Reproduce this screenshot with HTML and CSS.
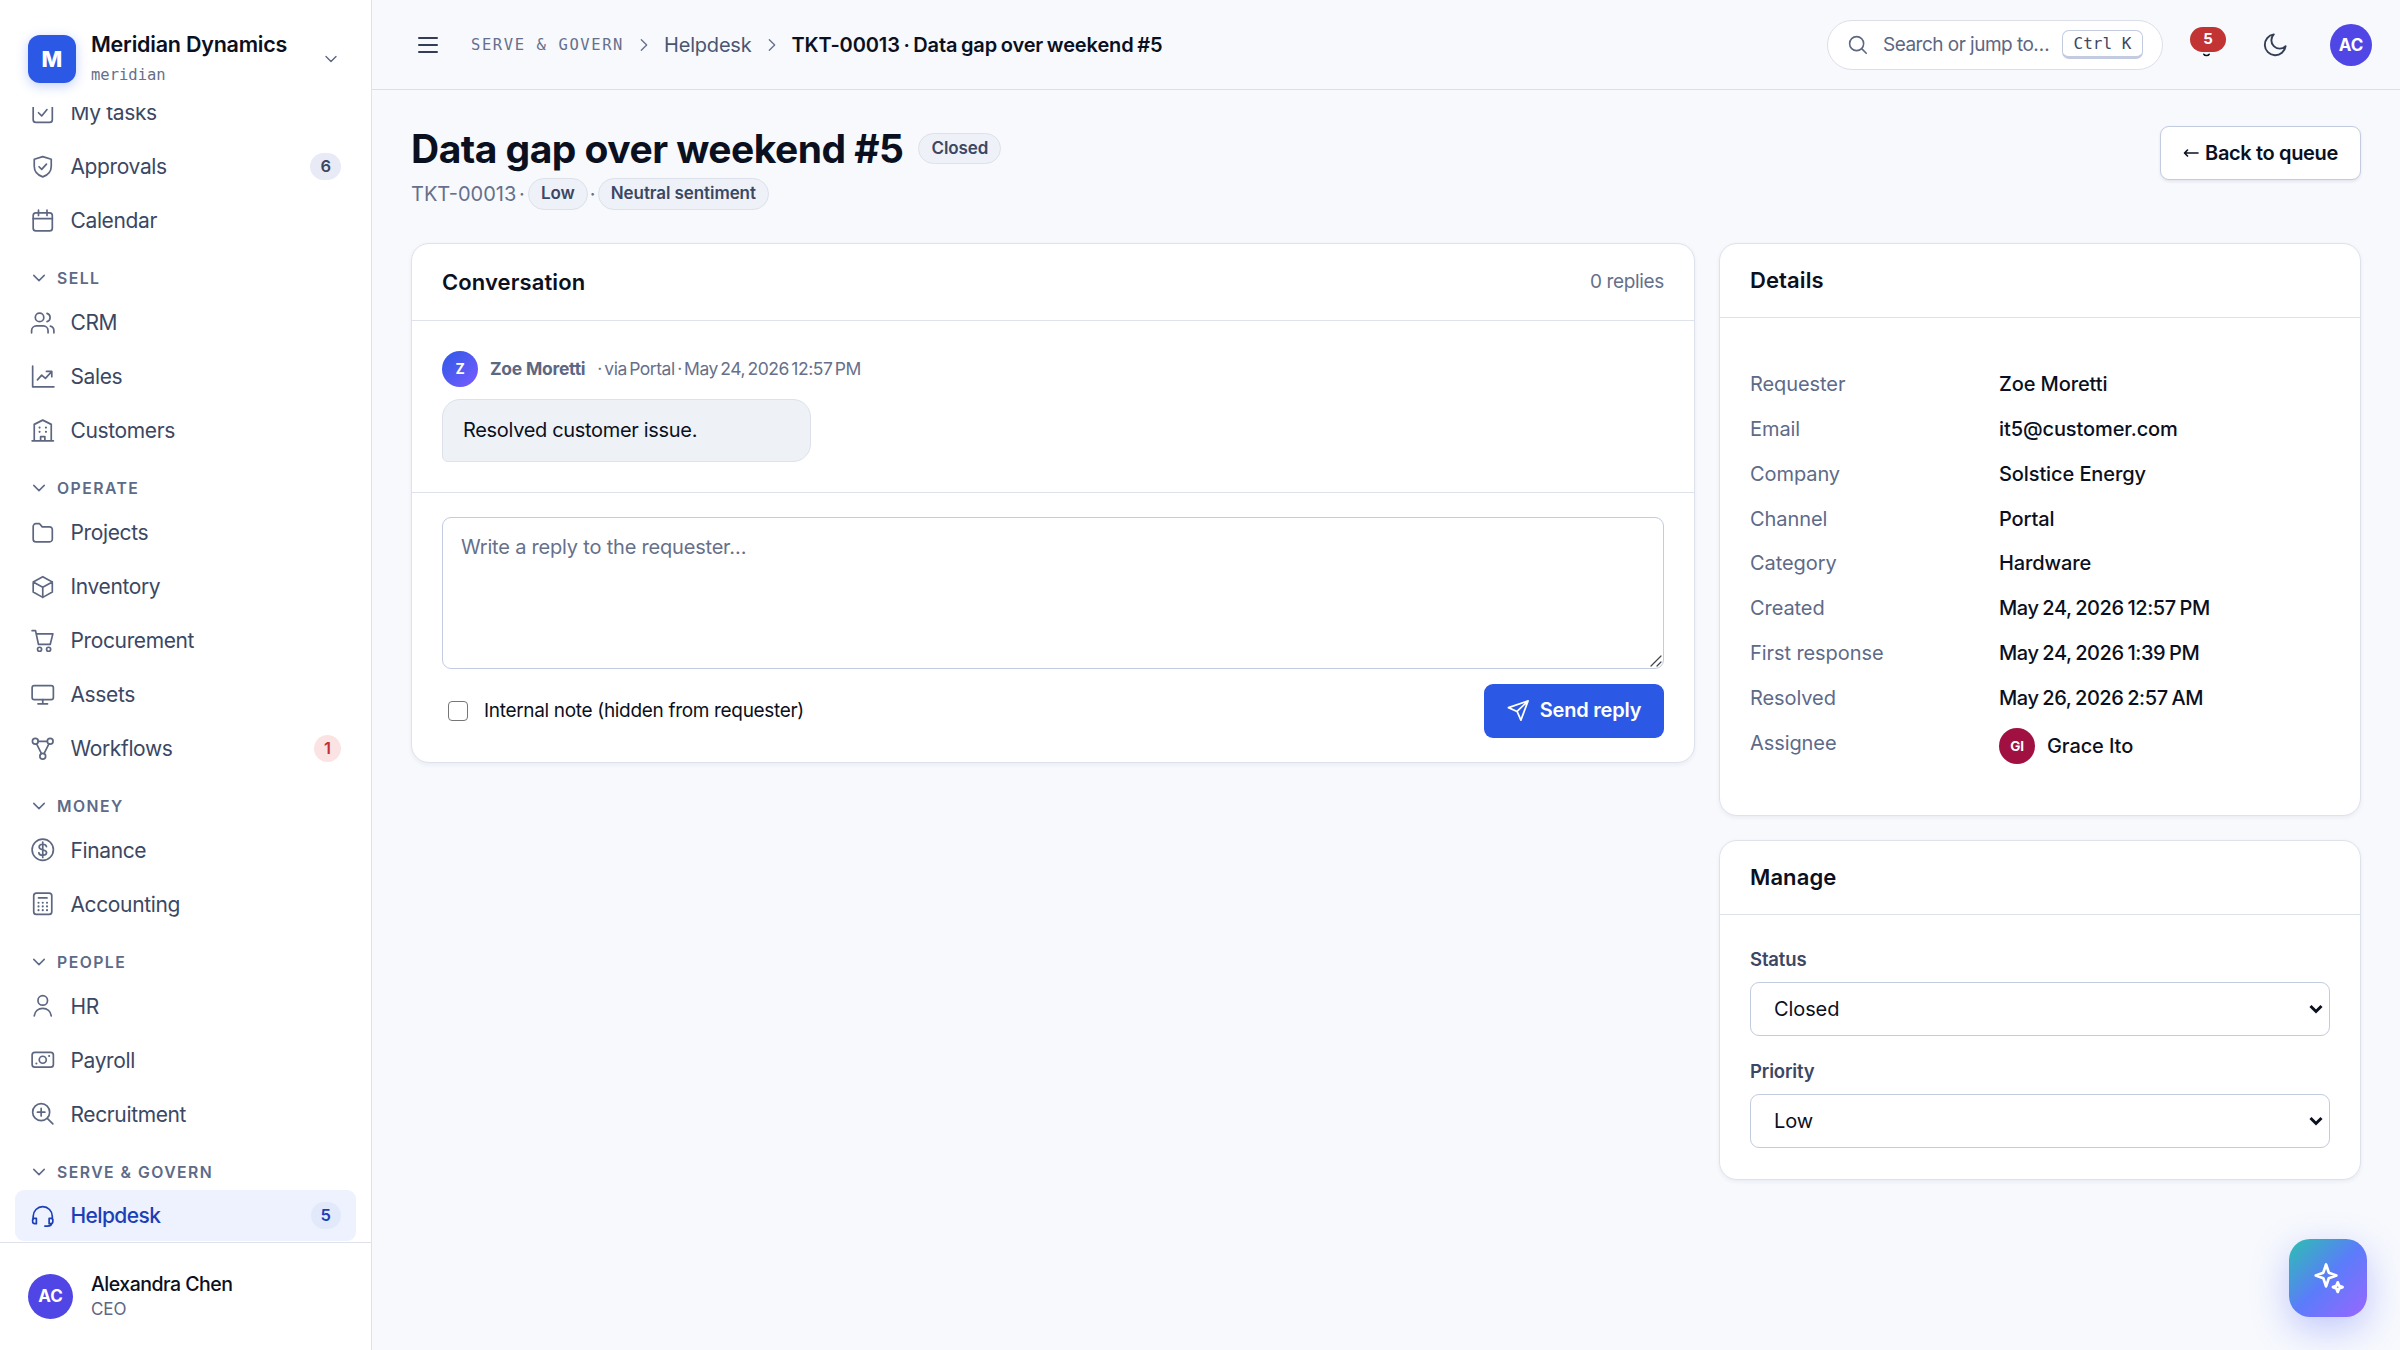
FILE: index.html
```html
<!DOCTYPE html>
<html lang="en">
<head>
    <meta charset="UTF-8">
    <meta name="viewport" content="width=device-width, initial-scale=1.0">
    <title>TKT-00013 · Data gap over weekend #5</title>
    <link rel="stylesheet" href="styles.css">
</head>
<body>
    <aside class="sidebar">
        <div class="workspace">
            <div class="workspace-logo">M</div>
            <div class="workspace-text">
                <div class="workspace-name">Meridian Dynamics</div>
                <div class="workspace-slug">meridian</div>
            </div>
            <svg class="workspace-caret" viewBox="0 0 24 24"><path d="m6 9 6 6 6-6"/></svg>
        </div>

        <nav class="nav">
            <a class="nav-item"><svg viewBox="0 0 24 24"><rect x="3" y="3" width="18" height="18" rx="2.5"/><path d="m8 12 3 3 5-6"/></svg><span>My tasks</span></a>
            <a class="nav-item"><svg viewBox="0 0 24 24"><path d="M12 2.5 20 5v6.5c0 5-3.5 8.5-8 10-4.5-1.5-8-5-8-10V5z"/><path d="m8.5 12 2.5 2.5 4.500-5"/></svg><span>Approvals</span><b class="count">6</b></a>
            <a class="nav-item"><svg viewBox="0 0 24 24"><rect x="3" y="4.500" width="18" height="17" rx="2.5"/><path d="M3 10h18M8 2v5M16 2v5"/></svg><span>Calendar</span></a>

            <div class="nav-heading"><svg viewBox="0 0 24 24"><path d="m5 8.5 7 7 7-7"/></svg>SELL</div>
            <a class="nav-item"><svg viewBox="0 0 24 24"><circle cx="9" cy="7" r="4"/><path d="M1.5 21.5v-2a4.5 4.5 0 0 1 4.5-4.5h6.500a4.5 4.5 0 0 1 4.5 4.5v2M16 3.2a4 4 0 0 1 0 7.700M22.5 21.5v-2a4.5 4.5 0 0 0-3.300-4.300"/></svg><span>CRM</span></a>
            <a class="nav-item"><svg viewBox="0 0 24 24"><path d="M2.5 2v19.500h20M7 15l4-4.500 3.500 3L20 7.500M15.500 7h5v5"/></svg><span>Sales</span></a>
            <a class="nav-item"><svg viewBox="0 0 24 24"><path d="M2 21.5h20M4 21.5V6l8-4 8 4v15.500M10 21.5v-4h4v4"/><path d="M9 9h.01M9 13h.01M15 9h.01M15 13h.01" stroke-width="2"/></svg><span>Customers</span></a>

            <div class="nav-heading"><svg viewBox="0 0 24 24"><path d="m5 8.5 7 7 7-7"/></svg>OPERATE</div>
            <a class="nav-item"><svg viewBox="0 0 24 24"><path d="M3 6a2.5 2.5 0 0 1 2.5-2.5H9l2.5 3h7A2.5 2.5 0 0 1 21 9v9a2.5 2.5 0 0 1-2.5 2.5h-13A2.5 2.5 0 0 1 3 18z"/></svg><span>Projects</span></a>
            <a class="nav-item"><svg viewBox="0 0 24 24"><path d="m12 2.5 9 5v9.500l-9 5-9-5V7.500zM3 7.500l9 5 9-5M12 12.500V22"/></svg><span>Inventory</span></a>
            <a class="nav-item"><svg viewBox="0 0 24 24"><circle cx="9" cy="20" r="1.900"/><circle cx="17.5" cy="20" r="1.900"/><path d="M2 2.5h3.200L8 15.500h11l2.500-10H6"/></svg><span>Procurement</span></a>
            <a class="nav-item"><svg viewBox="0 0 24 24"><rect x="2" y="3.5" width="20" height="13" rx="2"/><path d="M7.5 20.500h9M12 16.500v4"/></svg><span>Assets</span></a>
            <a class="nav-item"><svg viewBox="0 0 24 24"><circle cx="5" cy="5" r="2.700"/><circle cx="19" cy="5" r="2.700"/><circle cx="12" cy="19" r="2.700"/><path d="M7.700 5h8.600M6.200 7.500l4.600 9M17.800 7.500l-4.600 9"/></svg><span>Workflows</span><b class="count count-danger">1</b></a>

            <div class="nav-heading"><svg viewBox="0 0 24 24"><path d="m5 8.5 7 7 7-7"/></svg>MONEY</div>
            <a class="nav-item"><svg viewBox="0 0 24 24"><circle cx="12" cy="12" r="10"/><path d="M15.500 9c-.3-1.500-1.700-2.200-3.500-2.200S8.600 7.600 8.600 9.300c0 3.700 7 1.700 7 5.400 0 1.700-1.600 2.500-3.600 2.500s-3.400-.8-3.700-2.400M12 4.800v14.400"/></svg><span>Finance</span></a>
            <a class="nav-item"><svg viewBox="0 0 24 24"><rect x="3.5" y="2" width="17" height="20" rx="2.5"/><path d="M8 6.500h8"/><path d="M8 11h.01M12 11h.01M16 11h.01M8 14.500h.01M12 14.500h.01M16 14.500h.01M8 18h.01M12 18h.01M16 18h.01" stroke-width="2"/></svg><span>Accounting</span></a>

            <div class="nav-heading"><svg viewBox="0 0 24 24"><path d="m5 8.5 7 7 7-7"/></svg>PEOPLE</div>
            <a class="nav-item"><svg viewBox="0 0 24 24"><circle cx="12" cy="7" r="4.500"/><path d="M4 21.500c.6-4.300 3.800-7 8-7s7.400 2.700 8 7"/></svg><span>HR</span></a>
            <a class="nav-item"><svg viewBox="0 0 24 24"><rect x="2" y="5" width="20" height="14" rx="2.5"/><circle cx="12" cy="12" r="3.300"/><path d="M6 15.500h.01M18 8.500h.01" stroke-width="2"/></svg><span>Payroll</span></a>
            <a class="nav-item"><svg viewBox="0 0 24 24"><circle cx="10.5" cy="10.5" r="8"/><path d="m16.500 16.500 5 5M10.500 7v7M7 10.500h7"/></svg><span>Recruitment</span></a>

            <div class="nav-heading"><svg viewBox="0 0 24 24"><path d="m5 8.5 7 7 7-7"/></svg>SERVE &amp; GOVERN</div>
            <a class="nav-item active"><svg viewBox="0 0 24 24"><path d="M3 15v-2.500a9 9 0 0 1 18 0V15"/><path d="M3 14.500h3v5H4.500A2 2 0 0 1 2.500 17.500v-2M21 14.500h-3v5h1.500a2 2 0 0 0 2-2v-2M20.500 19.200c-.5 1.800-2 2.500-4 2.500H14"/></svg><span>Helpdesk</span><b class="count">5</b></a>
        </nav>

        <div class="user">
            <div class="avatar avatar-user">AC</div>
            <div>
                <div class="user-name">Alexandra Chen</div>
                <div class="user-role">CEO</div>
            </div>
        </div>
    </aside>

    <div class="page">
        <header class="topbar">
            <svg class="menu-icon" viewBox="0 0 24 24"><path d="M3 5h18M3 12h18M3 19h18"/></svg>
            <div class="crumbs">
                <span class="crumb-section">SERVE &amp; GOVERN</span>
                <svg class="crumb-sep" viewBox="0 0 24 24"><path d="m8 4 8 8-8 8"/></svg>
                <span class="crumb-link">Helpdesk</span>
                <svg class="crumb-sep" viewBox="0 0 24 24"><path d="m8 4 8 8-8 8"/></svg>
                <span class="crumb-current">TKT-00013 · Data gap over weekend #5</span>
            </div>
            <div class="search">
                <svg viewBox="0 0 24 24"><circle cx="11" cy="11" r="8"/><path d="m17 17 5 5"/></svg>
                <span>Search or jump to…</span>
                <kbd>Ctrl K</kbd>
            </div>
            <div class="bell">
                <svg viewBox="0 0 24 24"><path d="M9.500 20.500c.8 1.500 4.200 1.500 5 0"/></svg>
                <span class="bell-count">5</span>
            </div>
            <svg class="moon" viewBox="0 0 24 24"><path d="M21 13.500A9.300 9.300 0 1 1 10.500 3a7.300 7.300 0 0 0 10.500 10.500z"/></svg>
            <div class="avatar avatar-top">AC</div>
        </header>

        <main class="content">
            <div class="page-head">
                <div>
                    <div class="title-row">
                        <h1>Data gap over weekend #5</h1>
                        <span class="pill">Closed</span>
                    </div>
                    <div class="sub-row">
                        <span class="ticket-id">TKT-00013 ·</span>
                        <span class="pill">Low</span>
                        <span class="dot">·</span>
                        <span class="pill">Neutral sentiment</span>
                    </div>
                </div>
                <a class="back-button"><svg viewBox="0 0 16 12"><path d="M15 6H2M4.500 3 1.500 6l3 3"/></svg>Back to queue</a>
            </div>

            <div class="columns">
                <section class="card">
                    <div class="card-head conversation-head">
                        <h2>Conversation</h2>
                        <span class="replies">0 replies</span>
                    </div>
                    <div class="thread">
                        <div class="message-meta">
                            <div class="avatar avatar-z">Z</div>
                            <strong>Zoe Moretti</strong>
                            <span>· via Portal · May 24, 2026 12:57 PM</span>
                        </div>
                        <div class="bubble">Resolved customer issue.</div>
                    </div>
                    <div class="composer">
                        <div class="reply-box">
                            <textarea placeholder="Write a reply to the requester…"></textarea>
                            <svg class="grip" viewBox="0 0 12 12"><path d="M1 11 11 1M7 11l4-4"/></svg>
                        </div>
                        <div class="composer-actions">
                            <label class="note"><input type="checkbox">Internal note (hidden from requester)</label>
                            <button class="send"><svg viewBox="0 0 24 24"><path d="M22 2 14.500 22l-4-9-9-4zM22 2 10.500 13"/></svg>Send reply</button>
                        </div>
                    </div>
                </section>

                <div class="side">
                    <section class="card">
                        <div class="card-head"><h2>Details</h2></div>
                        <dl class="details">
                            <dt>Requester</dt><dd>Zoe Moretti</dd>
                            <dt>Email</dt><dd>it5@customer.com</dd>
                            <dt>Company</dt><dd>Solstice Energy</dd>
                            <dt>Channel</dt><dd>Portal</dd>
                            <dt>Category</dt><dd>Hardware</dd>
                            <dt>Created</dt><dd class="date">May 24, 2026 12:57 PM</dd>
                            <dt>First response</dt><dd class="date">May 24, 2026 1:39 PM</dd>
                            <dt>Resolved</dt><dd class="date">May 26, 2026 2:57 AM</dd>
                            <dt>Assignee</dt><dd class="assignee"><span class="avatar avatar-gi">GI</span>Grace Ito</dd>
                        </dl>
                    </section>

                    <section class="card">
                        <div class="card-head"><h2>Manage</h2></div>
                        <div class="manage">
                            <label class="field-label" for="status">Status</label>
                            <div class="select-wrap">
                                <select id="status"><option>Closed</option></select>
                                <svg viewBox="0 0 14 10"><path d="m1.500 2 5.500 5.500L12.500 2"/></svg>
                            </div>
                            <label class="field-label" for="priority">Priority</label>
                            <div class="select-wrap">
                                <select id="priority"><option>Low</option></select>
                                <svg viewBox="0 0 14 10"><path d="m1.500 2 5.500 5.500L12.500 2"/></svg>
                            </div>
                        </div>
                    </section>
                </div>
            </div>
        </main>
    </div>

    <button class="assistant" aria-label="Assistant">
        <svg viewBox="0 0 24 24"><path d="M9.500 2.500 11.500 8.500l5.500 2-5.500 2-2 6-2-6-5.500-2 5.500-2z"/><path d="m18 15.500 1 2.500 2.500 1-2.500 1-1 2.500-1-2.500-2.500-1 2.500-1z"/></svg>
    </button>
</body>
</html>
```

FILE: styles.css
```css
* {
    box-sizing: border-box;
}

body {
    margin: 0;
    height: 1350px;
    display: flex;
    overflow: hidden;
    background: #f7f9fd;
    color: #0b1020;
    font-family: "Inter", "Liberation Sans", sans-serif;
    font-size: 21px;
}

svg {
    fill: none;
    stroke: currentColor;
    stroke-width: 1.6;
    stroke-linecap: round;
    stroke-linejoin: round;
    flex: none;
}

h1, h2, dl, dd {
    margin: 0;
}

/* sidebar */
.sidebar {
    width: 372px;
    flex: none;
    display: flex;
    flex-direction: column;
    background: #fff;
    border-right: 1.5px solid #dfe2ea;
}

.workspace {
    height: 107px;
    flex: none;
    display: flex;
    align-items: center;
    padding: 10px 28px 0;
}

.workspace-logo {
    width: 48px;
    height: 48px;
    border-radius: 12px;
    background: #2b59e6;
    color: #fff;
    font-size: 22px;
    font-weight: 800;
    line-height: 48px;
    text-align: center;
    box-shadow: 0 3px 12px rgba(43, 89, 230, 0.28);
}

.workspace-text {
    flex: 1;
    margin-left: 15px;
}

.workspace-name {
    font-size: 21.5px;
    font-weight: 600;
    line-height: 32px;
    letter-spacing: -0.22px;
    white-space: nowrap;
}

.workspace-slug {
    font-family: "DejaVu Sans Mono", monospace;
    font-size: 15.5px;
    line-height: 30px;
    color: #66708b;
}

.workspace-caret {
    width: 20px;
    height: 20px;
    margin-right: 2px;
    color: #5a6580;
}

.nav {
    flex: 1;
    min-height: 0;
    overflow: hidden;
    padding: 0 15px;
    display: flex;
    flex-direction: column;
}

.nav-item {
    height: 51px;
    flex: none;
    margin-bottom: 3px;
    padding: 0 15px;
    display: flex;
    align-items: center;
    gap: 15px;
    border-radius: 9px;
    color: #3c4763;
    letter-spacing: -0.37px;
}

.nav-item:first-child {
    margin-top: -20px;
}

.nav-item svg {
    width: 25.5px;
    height: 25.5px;
    color: #5d6782;
}

.nav-item span {
    flex: 1;
}

.nav-item.active {
    background: #edf2fe;
    color: #1c3fb8;
    font-weight: 500;
    letter-spacing: -0.6px;
}

.nav-item.active svg {
    color: #1c3fb8;
}

.count {
    min-width: 27px;
    height: 27px;
    padding: 0 10px;
    border-radius: 14px;
    background: #e8ebf5;
    font-size: 16.5px;
    font-weight: 600;
    line-height: 27px;
    letter-spacing: 0;
    text-align: center;
}

.count-danger {
    background: #fbe3e4;
    color: #c22f35;
}

.active .count {
    background: #e2e9fa;
}

.nav-heading {
    height: 47.9px;
    flex: none;
    padding: 11px 15px 0;
    display: flex;
    align-items: center;
    gap: 9px;
    color: #5d6a88;
    font-size: 15.75px;
    font-weight: 600;
    letter-spacing: 1.47px;
}

.nav-heading svg {
    width: 18px;
    height: 18px;
    stroke-width: 2;
}

.user {
    height: 108px;
    flex: none;
    display: flex;
    align-items: center;
    gap: 18px;
    padding: 0 28px;
    border-top: 1.5px solid #dfe2ea;
}

.avatar {
    border-radius: 50%;
    color: #fff;
    font-weight: 700;
    text-align: center;
    flex: none;
}

.avatar-user {
    width: 45px;
    height: 45px;
    background: #4f46e5;
    font-size: 17px;
    line-height: 45px;
}

.user-name {
    font-size: 19.5px;
    font-weight: 500;
    line-height: 26px;
    letter-spacing: -0.5px;
}

.user-role {
    font-size: 17px;
    line-height: 25px;
    color: #5d6782;
    letter-spacing: -0.1px;
}

/* top bar */
.page {
    flex: 1;
    min-width: 0;
}

.topbar {
    height: 90px;
    display: flex;
    align-items: center;
    padding: 0 28px 0 44px;
    border-bottom: 1.5px solid #dcdfe8;
}

.menu-icon {
    width: 24px;
    height: 24px;
    color: #333d55;
    stroke-width: 2;
}

.crumbs {
    flex: 1;
    display: flex;
    align-items: center;
    margin-left: 31px;
    white-space: nowrap;
}

.crumb-section {
    font-family: "DejaVu Sans Mono", monospace;
    font-size: 15.5px;
    letter-spacing: 1.6px;
    color: #66708b;
}

.crumb-sep {
    width: 16px;
    height: 16px;
    margin: 0 12px;
    color: #66708b;
    stroke-width: 2;
}

.crumb-link {
    font-size: 20px;
    color: #4a5571;
    letter-spacing: -0.2px;
}

.crumb-current {
    font-size: 20px;
    font-weight: 600;
    letter-spacing: -0.12px;
    word-spacing: -1.3px;
}

.search {
    width: 336px;
    height: 50px;
    display: flex;
    align-items: center;
    padding: 0 19px 0 19px;
    border: 1.5px solid #dcdfe8;
    border-radius: 25px;
    background: #fff;
    color: #5d6782;
    font-size: 19px;
    letter-spacing: -0.52px;
    white-space: nowrap;
}

.search svg {
    width: 21px;
    height: 21px;
    stroke-width: 1.8;
}

.search span {
    flex: 1;
    margin-left: 15px;
}

.search kbd {
    width: 81px;
    height: 29px;
    border: 1.5px solid #c3cbe0;
    border-bottom-width: 3px;
    border-radius: 7px;
    color: #3c4763;
    font-family: "DejaVu Sans Mono", monospace;
    font-size: 16px;
    letter-spacing: 0;
    line-height: 26px;
    text-align: center;
}

.bell {
    position: relative;
    width: 36px;
    height: 50px;
    margin-left: 27px;
}

.bell svg {
    position: absolute;
    left: 4px;
    top: 13px;
    width: 25px;
    height: 25px;
}

.bell-count {
    position: absolute;
    left: 0;
    top: 7px;
    width: 36px;
    height: 25px;
    border-radius: 13px;
    background: #c23333;
    color: #fff;
    font-size: 15px;
    font-weight: 700;
    line-height: 23px;
    text-align: center;
}

.moon {
    width: 27px;
    height: 27px;
    margin-left: 36px;
    color: #333d55;
    stroke-width: 1.7;
}

.avatar-top {
    width: 42px;
    height: 42px;
    margin-left: 41px;
    background: #4f46e5;
    font-size: 17px;
    line-height: 42px;
}

/* page header */
.content {
    padding: 31px 39px 0;
}

.page-head {
    display: flex;
    justify-content: space-between;
    align-items: flex-start;
    height: 122px;
    padding-top: 5px;
}

.title-row {
    display: flex;
    align-items: center;
    gap: 15px;
    height: 45px;
}

h1 {
    font-size: 39px;
    font-weight: 700;
    letter-spacing: -0.52px;
    white-space: nowrap;
}

.pill {
    height: 31.5px;
    padding: 0 12px;
    border: 1.5px solid #dce1ea;
    border-radius: 16px;
    background: #eef2f8;
    color: #3c4763;
    font-size: 17px;
    font-weight: 600;
    line-height: 29px;
    letter-spacing: -0.08px;
    white-space: nowrap;
}

.sub-row {
    display: flex;
    align-items: center;
    height: 46px;
    color: #66708b;
    font-size: 20px;
}

.ticket-id {
    width: 117px;
    letter-spacing: 0;
    word-spacing: -3px;
    white-space: nowrap;
}

.dot {
    width: 10px;
    text-align: center;
}

.back-button {
    width: 201px;
    height: 54px;
    display: flex;
    align-items: center;
    justify-content: center;
    gap: 6px;
    padding-bottom: 1px;
    border: 1.5px solid #c3cbe0;
    border-radius: 9px;
    background: #fff;
    box-shadow: 0 1.5px 3px rgba(20, 30, 60, 0.08);
    font-size: 20px;
    font-weight: 600;
    letter-spacing: -0.35px;
}

.back-button svg {
    width: 16px;
    height: 12px;
}

/* cards */
.columns {
    display: grid;
    grid-template-columns: 1284px 1fr;
    gap: 24px;
    align-items: start;
}

.card {
    border: 1.5px solid #dee2ea;
    border-radius: 18px;
    background: #fff;
    box-shadow: 0 1.5px 4px rgba(20, 30, 60, 0.06);
}

.card-head {
    height: 74px;
    display: flex;
    align-items: center;
    justify-content: space-between;
    padding: 0 30px 1px;
    border-bottom: 1.5px solid #dee2ea;
}

.conversation-head {
    height: 77px;
}

h2 {
    font-size: 22px;
    font-weight: 600;
    letter-spacing: 0.1px;
}

.replies {
    color: #66708b;
    font-size: 19px;
    letter-spacing: -0.35px;
}

.thread {
    height: 172px;
    padding: 30px;
    border-bottom: 1.5px solid #dee2ea;
}

.message-meta {
    display: flex;
    align-items: center;
    height: 36px;
    color: #66708b;
    font-size: 17.5px;
    letter-spacing: -0.45px;
    white-space: nowrap;
}

.message-meta span {
    word-spacing: -2.1px;
    margin-bottom: 1px;
}

.message-meta strong {
    margin: 0 12px 1px;
    color: #5d6782;
    font-weight: 700;
    letter-spacing: -0.25px;
}

.avatar-z {
    width: 36px;
    height: 36px;
    background: linear-gradient(135deg, #2b59e6, #7a5cff);
    font-size: 14px;
    line-height: 35px;
}

.bubble {
    width: 369px;
    height: 63px;
    margin-top: 12px;
    padding: 0 20px;
    border: 1.5px solid #dce1ea;
    border-radius: 18px 18px 18px 6px;
    background: #eef2f7;
    font-size: 20px;
    line-height: 61px;
    letter-spacing: -0.32px;
}

.composer {
    padding: 24px 30px;
}

.reply-box {
    position: relative;
    height: 151.5px;
}

.reply-box textarea {
    display: block;
    width: 100%;
    height: 100%;
    padding: 14px 18px;
    border: 1.5px solid #c3cbe0;
    border-radius: 9px;
    background: #fff;
    font-family: inherit;
    font-size: 20px;
    line-height: 30px;
    letter-spacing: -0.2px;
    resize: none;
    outline: none;
}

.reply-box textarea::placeholder {
    color: #66708b;
}

.grip {
    position: absolute;
    right: 2px;
    bottom: 2px;
    width: 12px;
    height: 12px;
    stroke: #444;
    stroke-width: 1.2;
}

.composer-actions {
    display: flex;
    align-items: center;
    justify-content: space-between;
    margin-top: 15px;
}

.note {
    display: flex;
    align-items: center;
    font-size: 19px;
    letter-spacing: -0.32px;
}

.note input {
    appearance: none;
    width: 20px;
    height: 20px;
    margin: 0 16px 0 6px;
    border: 1.5px solid #767676;
    border-radius: 4px;
    background: #fff;
}

.send {
    width: 180px;
    height: 54px;
    display: flex;
    align-items: center;
    justify-content: center;
    gap: 10px;
    padding: 0 0 1px;
    border: 0;
    border-radius: 9px;
    background: #2b59e6;
    color: #fff;
    font-family: inherit;
    font-size: 20px;
    font-weight: 600;
    letter-spacing: -0.2px;
}

.send svg {
    width: 23px;
    height: 23px;
    stroke-width: 1.8;
}

.side {
    display: flex;
    flex-direction: column;
    gap: 24px;
}

.details {
    display: grid;
    grid-template-columns: 249px 1fr;
    grid-auto-rows: 44.85px;
    height: 496.5px;
    padding: 44px 30px;
    font-size: 20px;
    line-height: 44px;
    letter-spacing: -0.08px;
}

.details dt {
    color: #5d6a88;
}

.details dd {
    font-weight: 500;
    letter-spacing: -0.1px;
    white-space: nowrap;
}

.details .date {
    letter-spacing: -0.45px;
    word-spacing: -1px;
}

.details .assignee {
    display: flex;
    align-items: center;
    height: 51px;
    gap: 12px;
}

.avatar-gi {
    width: 36px;
    height: 36px;
    background: #a01040;
    font-size: 13.5px;
    line-height: 36px;
}

.manage {
    height: 264px;
    padding: 29px 30px 0;
}

.field-label {
    display: block;
    height: 38px;
    color: #3c4763;
    font-size: 18.5px;
    font-weight: 600;
    line-height: 30px;
    letter-spacing: -0.15px;
}

.select-wrap {
    position: relative;
    margin-bottom: 20px;
}

.select-wrap select {
    display: block;
    appearance: none;
    width: 100%;
    height: 54px;
    padding: 0 23px;
    border: 1.5px solid #c3cbe0;
    border-radius: 9px;
    background: #fff;
    color: #0b1020;
    font-family: inherit;
    font-size: 20px;
    letter-spacing: -0.1px;
}

.select-wrap svg {
    position: absolute;
    right: 7px;
    top: 22px;
    width: 14px;
    height: 10px;
    stroke-width: 3;
    stroke-linecap: butt;
    stroke-linejoin: miter;
}

/* floating assistant button */
.assistant {
    position: absolute;
    right: 33px;
    bottom: 33px;
    width: 78px;
    height: 78px;
    padding: 0 0 2px 3px;
    border: 0;
    border-radius: 21px;
    background: linear-gradient(135deg, #2cc0b0, #5b7cfa 50%, #9a66ff);
    box-shadow: 0 12px 36px rgba(91, 110, 250, 0.35);
    color: #fff;
}

.assistant svg {
    width: 33px;
    height: 33px;
    stroke-width: 2;
    vertical-align: middle;
}
```
